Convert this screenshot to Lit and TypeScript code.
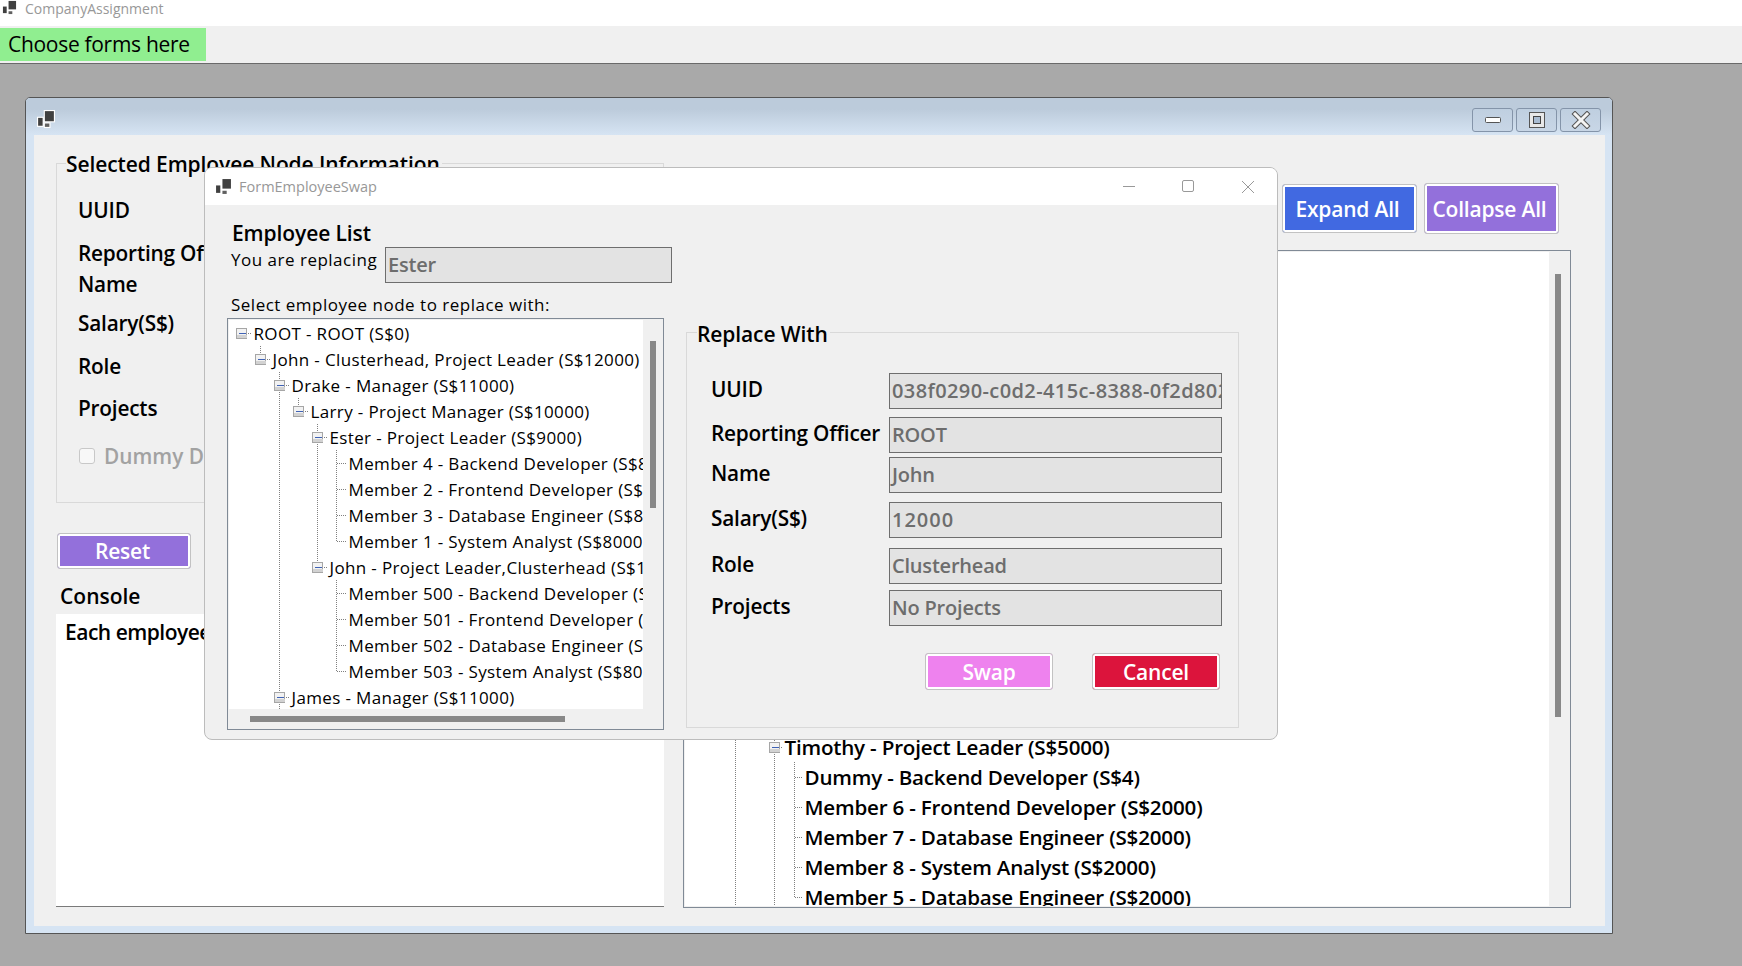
import { LitElement, html, css, svg } from "lit";
import { customElement, property } from "lit/decorators.js";

interface EmpNode {
  label: string;
  children?: EmpNode[];
}

interface FlatRow {
  label: string;
  depth: number;
  lines: boolean[];
  hasNext: boolean;
  expandable: boolean;
  isFirst: boolean;
}

// flat list of visible rows; lines[i] says whether depth i keeps a guide going
function flatten(nodes: EmpNode[], depth: number, lines: boolean[], top: boolean): FlatRow[] {
  const rows: FlatRow[] = [];
  nodes.forEach((n, i) => {
    const hasNext = i < nodes.length - 1;
    rows.push({
      label: n.label,
      depth,
      lines,
      hasNext,
      expandable: !!n.children,
      isFirst: top && i === 0,
    });
    if (n.children) rows.push(...flatten(n.children, depth + 1, [...lines, hasNext], false));
  });
  return rows;
}

@customElement("tree-rows")
export class TreeRows extends LitElement {
  @property({ attribute: false }) nodes: EmpNode[] = [];
  @property({ attribute: false }) startLines: boolean[] = [];
  @property({ type: Number }) base = 12;
  @property({ type: Number }) indent = 19;
  @property({ type: Number }) rowHeight = 26;
  @property({ type: Number }) gap = 12;
  @property({ type: Boolean, reflect: true }) bold = false;

  static styles = css`
    :host {
      display: block;
      font-family: "Open Sans", "Noto Sans", sans-serif;
      font-size: 17px;
      letter-spacing: 0.36px;
      color: #000;
    }
    :host([bold]) {
      font-size: 20.6px;
      font-weight: 600;
      letter-spacing: -0.2px;
    }
    .row {
      display: flex;
      align-items: center;
      white-space: nowrap;
    }
    svg {
      flex: none;
      display: block;
    }
  `;

  private x(depth: number) {
    return Math.round(this.base + this.indent * depth) + 0.5;
  }

  private guides(r: FlatRow) {
    const h = this.rowHeight;
    const mid = Math.floor(h / 2) + 0.5;
    const x = this.x(r.depth);
    const dot = "stroke:#808080;stroke-dasharray:1 1";
    return html`<svg width=${x + this.gap} height=${h} shape-rendering="crispEdges">
      ${r.lines.map((on, i) =>
        on ? svg`<line x1=${this.x(i)} x2=${this.x(i)} y1="0" y2=${h} style=${dot} />` : ""
      )}
      ${r.isFirst
        ? ""
        : svg`<line x1=${x} x2=${x} y1="0" y2=${r.hasNext ? h : mid} style=${dot} />`}
      ${r.hasNext && r.isFirst ? svg`<line x1=${x} x2=${x} y1=${mid} y2=${h} style=${dot} />` : ""}
      <line x1=${x} x2=${x + this.gap - 2} y1=${mid} y2=${mid} style=${dot} />
      ${r.expandable
        ? svg`
          <rect x=${x - 5} y=${mid - 5} width="10" height="10" fill="#f2f2f2" stroke="#a6a6a6" />
          <rect x=${x - 4.5} y=${mid + 1} width="10" height="3.5" fill="#d2d2d2" />
          <line x1=${x - 3} x2=${x + 4} y1=${mid} y2=${mid} stroke="#3f62b5" />`
        : ""}
    </svg>`;
  }

  render() {
    const rows = flatten(this.nodes, this.startLines.length, this.startLines, this.startLines.length === 0);
    return rows.map(
      (r) => html`<div class="row" style="height:${this.rowHeight}px">${this.guides(r)}<span>${r.label}</span></div>`
    );
  }
}

const LEFT_TREE: EmpNode[] = [
  {
    label: "ROOT - ROOT (S$0)",
    children: [
      {
        label: "John - Clusterhead, Project Leader (S$12000)",
        children: [
          {
            label: "Drake - Manager (S$11000)",
            children: [
              {
                label: "Larry - Project Manager (S$10000)",
                children: [
                  {
                    label: "Ester - Project Leader (S$9000)",
                    children: [
                      { label: "Member 4 - Backend Developer (S$8000)" },
                      { label: "Member 2 - Frontend Developer (S$8000)" },
                      { label: "Member 3 - Database Engineer (S$8000)" },
                      { label: "Member 1 - System Analyst (S$8000)" },
                    ],
                  },
                  {
                    label: "John - Project Leader,Clusterhead (S$12000)",
                    children: [
                      { label: "Member 500 - Backend Developer (S$8000)" },
                      { label: "Member 501 - Frontend Developer (S$8000)" },
                      { label: "Member 502 - Database Engineer (S$8000)" },
                      { label: "Member 503 - System Analyst (S$8000)" },
                    ],
                  },
                ],
              },
            ],
          },
          { label: "James - Manager (S$11000)", children: [] },
          { label: "" },
        ],
      },
    ],
  },
];

const RIGHT_TREE: EmpNode[] = [
  {
    label: "Timothy - Project Leader (S$5000)",
    children: [
      { label: "Dummy - Backend Developer (S$4)" },
      { label: "Member 6 - Frontend Developer (S$2000)" },
      { label: "Member 7 - Database Engineer (S$2000)" },
      { label: "Member 8 - System Analyst (S$2000)" },
      { label: "Member 5 - Database Engineer (S$2000)" },
    ],
  },
  { label: "" },
];

const FIELDS = [
  ["UUID", "038f0290-c0d2-415c-8388-0f2d802a41c7", "uuid"],
  ["Reporting Officer", "ROOT", ""],
  ["Name", "John", ""],
  ["Salary(S$)", "12000", "num"],
  ["Role", "Clusterhead", ""],
  ["Projects", "No Projects", ""],
];

const appIcon = html`<svg class="app-icon" viewBox="0 0 16 16">
  <rect x="6" y="0" width="10" height="11" fill="#fff" />
  <rect x="7" y="1" width="8" height="9" fill="#404040" />
  <rect x="0" y="6" width="6" height="9" fill="#fff" />
  <rect x="1" y="7" width="4" height="7" fill="#404040" />
  <rect x="6" y="11" width="6" height="5" fill="#fff" />
  <rect x="7" y="12" width="4" height="3" fill="#606060" />
</svg>`;

@customElement("app-root")
export class AppRoot extends LitElement {
  static styles = css`
    :host {
      display: flex;
      flex-direction: column;
      height: 966px;
      overflow: hidden;
      font-family: "Open Sans", "Noto Sans", sans-serif;
      color: #000;
      background: #a9a9a9;
    }
    .app-icon {
      display: block;
      flex: none;
    }
    .app-title {
      height: 26px;
      flex: none;
      display: flex;
      align-items: center;
      background: #fff;
      overflow: hidden;
    }
    .app-title .app-icon {
      width: 15px;
      height: 15px;
      margin: -12px 0 0 2px;
    }
    .app-title span {
      margin: -9px 0 0 8px;
      font-size: 14px;
      color: #989898;
    }
    .menu {
      height: 37px;
      flex: none;
      background: #f0f0f0;
      border-bottom: 1px solid #6a6a6a;
      box-sizing: content-box;
    }
    .menu-item {
      width: 206px;
      height: 33px;
      margin-top: 2px;
      padding-left: 8px;
      box-sizing: border-box;
      background: #90ee90;
      font-size: 21px;
      line-height: 33px;
      letter-spacing: -0.3px;
    }
    .mdi {
      flex: 1;
      position: relative;
    }

    .child {
      position: absolute;
      left: 25px;
      top: 33px;
      width: 1588px;
      height: 837px;
      box-sizing: border-box;
      border: 1px solid #555;
      border-radius: 5px 5px 0 0;
      background: #d6e4f3;
      display: flex;
      flex-direction: column;
      padding: 0 7px 7px 8px;
    }
    .child-bar {
      height: 37px;
      flex: none;
      margin: 0 -7px 0 -8px;
      padding: 0 11px 0 11px;
      border-radius: 4px 4px 0 0;
      background: linear-gradient(#bccbdb 30%, #d6e4f3);
      display: flex;
      align-items: center;
      justify-content: space-between;
    }
    .child-bar .app-icon {
      width: 18px;
      height: 18px;
      margin-top: 4px;
    }
    .win-btns {
      display: flex;
      gap: 3px;
      margin-top: 6px;
    }
    .win-btn {
      width: 41px;
      height: 24px;
      box-sizing: border-box;
      border: 1px solid #8494a9;
      border-radius: 3px;
      background: linear-gradient(#bfcfe0, #c8d6e6);
      display: flex;
      align-items: center;
      justify-content: center;
    }
    .child-client {
      flex: 1;
      background: #f0f0f0;
      display: grid;
      grid-template-columns: 608px 888px;
      column-gap: 19px;
      padding-left: 22px;
      min-height: 0;
    }
    .col-left {
      padding-top: 28px;
      display: flex;
      flex-direction: column;
    }
    .col-right {
      padding-top: 48px;
      display: flex;
      flex-direction: column;
    }

    .group {
      box-sizing: border-box;
      border: 1px solid #d9d9d9;
    }
    .legend {
      width: fit-content;
      margin: -14px 0 0 9px;
      padding: 0 2px 0 0;
      background: #f0f0f0;
      font-size: 21px;
      font-weight: 600;
      line-height: 28px;
      letter-spacing: -0.1px;
      white-space: nowrap;
    }
    .label {
      font-size: 20.8px;
      font-weight: 600;
      line-height: 30px;
      letter-spacing: -0.2px;
      white-space: nowrap;
    }

    .main-group {
      height: 340px;
    }
    .main-fields {
      margin: 17px 0 0 21px;
      display: grid;
      grid-template-rows: 43px 31px 39px 43px 42px 48px 30px;
    }
    .dummy {
      display: flex;
      align-items: center;
      gap: 9px;
      color: #a2a2a2;
      font-size: 20.8px;
      font-weight: 600;
      line-height: 30px;
      white-space: nowrap;
    }
    .checkbox {
      width: 16px;
      height: 16px;
      margin-left: 1px;
      box-sizing: border-box;
      border: 1px solid #c8c8c8;
      border-radius: 3px;
      background: #f8f8f8;
    }

    .btn {
      box-sizing: border-box;
      border: 1px solid #c2c2c2;
      border-radius: 3px;
      box-shadow: inset 0 0 0 2px #fff;
      color: #fff;
      font-size: 21px;
      font-weight: 600;
      letter-spacing: -0.2px;
      display: flex;
      align-items: center;
      justify-content: center;
    }
    .royal {
      background: #4169e1;
    }
    .purple {
      background: #9370db;
    }
    .violet {
      background: #ee82ee;
    }
    .crimson {
      background: #dc143c;
    }
    .reset {
      width: 134px;
      height: 36px;
      margin: 30px 0 0 1px;
      padding-right: 3px;
    }
    .console-label {
      margin: 13px 0 4px 4px;
      font-size: 21px;
      font-weight: 600;
      line-height: 28px;
    }
    .console {
      height: 293px;
      box-sizing: border-box;
      padding: 4px 9px;
      background: #fff;
      border-bottom: 1px solid #7a7a7a;
      font-size: 21px;
      font-weight: 600;
      line-height: 28px;
      letter-spacing: -0.5px;
      white-space: nowrap;
      overflow: hidden;
    }

    .tree-actions {
      display: flex;
      justify-content: flex-end;
      align-items: center;
      gap: 7px;
      height: 51px;
      padding-right: 12px;
    }
    .tree-actions .btn {
      width: 135px;
      padding-right: 4px;
    }
    .expand {
      height: 49px;
    }
    .collapse {
      height: 51px;
    }
    .tree-box {
      box-sizing: border-box;
      border: 1px solid #808a96;
      background: #f0f0f0;
      display: grid;
      overflow: hidden;
    }
    .viewport {
      background: #fff;
      overflow: hidden;
      min-width: 0;
      min-height: 0;
    }
    .main-tree {
      margin-top: 16px;
      height: 658px;
      grid-template-columns: 1fr 18px;
      padding: 1px 3px 1px 1px;
    }
    .main-tree .viewport {
      display: flex;
      flex-direction: column;
      justify-content: flex-end;
    }
    .main-tree tree-rows {
      margin-bottom: -36px;
    }
    .vtrack {
      display: flex;
      justify-content: center;
    }
    .main-thumb {
      width: 6px;
      height: 443px;
      margin-top: 22px;
      background: #888;
    }

    .dialog {
      position: absolute;
      left: 204px;
      top: 103px;
      width: 1074px;
      height: 573px;
      box-sizing: border-box;
      border: 1px solid #bcbcbc;
      border-radius: 8px;
      background: #f0f0f0;
      display: flex;
      flex-direction: column;
      overflow: hidden;
    }
    .dialog-bar {
      height: 37px;
      flex: none;
      background: #fff;
      display: flex;
      align-items: center;
      padding-left: 10px;
    }
    .dialog-bar .app-icon {
      width: 17px;
      height: 17px;
    }
    .dialog-bar .name {
      margin-left: 7px;
      font-size: 14.5px;
      color: #989898;
      flex: 1;
    }
    .dialog-ctl {
      width: 59px;
      display: flex;
      justify-content: center;
    }
    .dialog-body {
      flex: 1;
      display: grid;
      grid-template-columns: 437px 553px;
      column-gap: 22px;
      padding-left: 22px;
    }
    .heading {
      margin: 14px 0 0 5px;
      font-size: 21px;
      font-weight: 600;
      line-height: 28px;
      letter-spacing: -0.1px;
    }
    .replace-row {
      display: flex;
      height: 36px;
    }
    .text {
      font-size: 17px;
      line-height: 26px;
      letter-spacing: 0.5px;
      white-space: nowrap;
    }
    .replace-row .text {
      flex: none;
      width: 154px;
      margin-left: 4px;
    }
    .select-label {
      margin: 9px 0 0 4px;
    }
    .field {
      box-sizing: border-box;
      height: 36px;
      border: 1px solid #6e6e6e;
      background: #e3e3e3;
      color: #6d6d6d;
      font-size: 20px;
      font-weight: 600;
      line-height: 34px;
      letter-spacing: -0.2px;
      padding-left: 2px;
      overflow: hidden;
      white-space: nowrap;
    }
    .field.uuid {
      letter-spacing: 0.4px;
    }
    .field.num {
      letter-spacing: 1px;
    }
    .ester {
      flex: none;
      width: 287px;
    }
    .picker {
      height: 412px;
      grid-template-columns: 414px 1fr;
      grid-template-rows: 389px 1fr;
      padding: 1px;
    }
    .picker .vtrack .thumb {
      width: 6px;
      height: 167px;
      margin-top: 21px;
      background: #888;
    }
    .htrack {
      grid-column: 1 / 3;
      padding: 7px 0 0 21px;
    }
    .htrack .thumb {
      width: 315px;
      height: 6px;
      background: #888;
    }
    .replace-group {
      margin-top: 127px;
      height: 396px;
    }
    .replace-group .legend {
      margin-top: -13px;
      margin-left: 10px;
    }
    .replace-fields {
      margin: 25px 16px 0 24px;
      display: grid;
      grid-template-columns: 178px 1fr;
      grid-template-rows: 44px 40px 45px 46px 42px 36px;
    }
    .replace-fields .label {
      padding-top: 1px;
    }
    .actions {
      display: flex;
      justify-content: flex-end;
      gap: 39px;
      margin: 27px 18px 0 0;
    }
    .actions .btn {
      width: 128px;
      height: 37px;
    }
  `;

  render() {
    return html`
      <div class="app-title">${appIcon}<span>CompanyAssignment</span></div>
      <div class="menu"><div class="menu-item">Choose forms here</div></div>
      <div class="mdi">
        ${this.renderChild()} ${this.renderDialog()}
      </div>
    `;
  }

  private renderChild() {
    return html`
      <div class="child">
        <div class="child-bar">
          ${appIcon}
          <div class="win-btns">
            <div class="win-btn">
              <svg width="18" height="8"><rect x="1.5" y="1.5" width="15" height="5" rx="1" fill="#fff" stroke="#555" /></svg>
            </div>
            <div class="win-btn">
              <svg width="18" height="18">
                <rect x="1.5" y="1.5" width="15" height="15" fill="#e8e8e8" stroke="#555" />
                <rect x="5.5" y="5.5" width="7" height="7" fill="#a9bcd2" stroke="#444" />
              </svg>
            </div>
            <div class="win-btn">
              <svg width="20" height="18" viewBox="0 0 20 18">
                <path d="M4 3 L16 15 M16 3 L4 15" stroke="#555" stroke-width="5" stroke-linecap="square" />
                <path d="M4 3 L16 15 M16 3 L4 15" stroke="#f4f4f4" stroke-width="3" stroke-linecap="square" />
              </svg>
            </div>
          </div>
        </div>
        <div class="child-client">
          <div class="col-left">
            <div class="group main-group">
              <div class="legend">Selected Employee Node Information</div>
              <div class="main-fields">
                <div class="label">UUID</div>
                <div class="label">Reporting Officer</div>
                <div class="label">Name</div>
                <div class="label">Salary(S$)</div>
                <div class="label">Role</div>
                <div class="label">Projects</div>
                <div class="dummy"><span class="checkbox"></span>Dummy Data</div>
              </div>
            </div>
            <div class="btn purple reset">Reset</div>
            <div class="console-label">Console</div>
            <div class="console">Each employee</div>
          </div>
          <div class="col-right">
            <div class="tree-actions">
              <div class="btn royal expand">Expand All</div>
              <div class="btn purple collapse">Collapse All</div>
            </div>
            <div class="tree-box main-tree">
              <div class="viewport">
                <tree-rows
                  bold
                  .nodes=${RIGHT_TREE}
                  .startLines=${[false, false, true, false]}
                  base="11"
                  indent="19.5"
                  rowHeight="30"
                  gap="10"
                ></tree-rows>
              </div>
              <div class="vtrack"><div class="main-thumb"></div></div>
            </div>
          </div>
        </div>
      </div>
    `;
  }

  private renderDialog() {
    return html`
      <div class="dialog">
        <div class="dialog-bar">
          ${appIcon}
          <span class="name">FormEmployeeSwap</span>
          <div class="dialog-ctl"><svg width="13" height="13"><line x1="0" x2="12" y1="6.5" y2="6.5" stroke="#999" /></svg></div>
          <div class="dialog-ctl"><svg width="13" height="13"><rect x="0.5" y="0.5" width="11" height="11" rx="1.5" fill="none" stroke="#999" /></svg></div>
          <div class="dialog-ctl"><svg width="14" height="14"><path d="M1 1 L13 13 M13 1 L1 13" stroke="#999" fill="none" /></svg></div>
        </div>
        <div class="dialog-body">
          <div>
            <div class="heading">Employee List</div>
            <div class="replace-row">
              <div class="text">You are replacing</div>
              <div class="field ester">Ester</div>
            </div>
            <div class="text select-label">Select employee node to replace with:</div>
            <div class="tree-box picker">
              <div class="viewport">
                <tree-rows .nodes=${LEFT_TREE} base="12" indent="19" rowHeight="26" gap="12"></tree-rows>
              </div>
              <div class="vtrack"><div class="thumb"></div></div>
              <div class="htrack"><div class="thumb"></div></div>
            </div>
          </div>
          <div class="group replace-group">
            <div class="legend">Replace With</div>
            <div class="replace-fields">
              ${FIELDS.map(
                ([k, v, c]) => html`<div class="label">${k}</div><div class="field ${c}">${v}</div>`
              )}
            </div>
            <div class="actions">
              <div class="btn violet">Swap</div>
              <div class="btn crimson">Cancel</div>
            </div>
          </div>
        </div>
      </div>
    `;
  }
}
